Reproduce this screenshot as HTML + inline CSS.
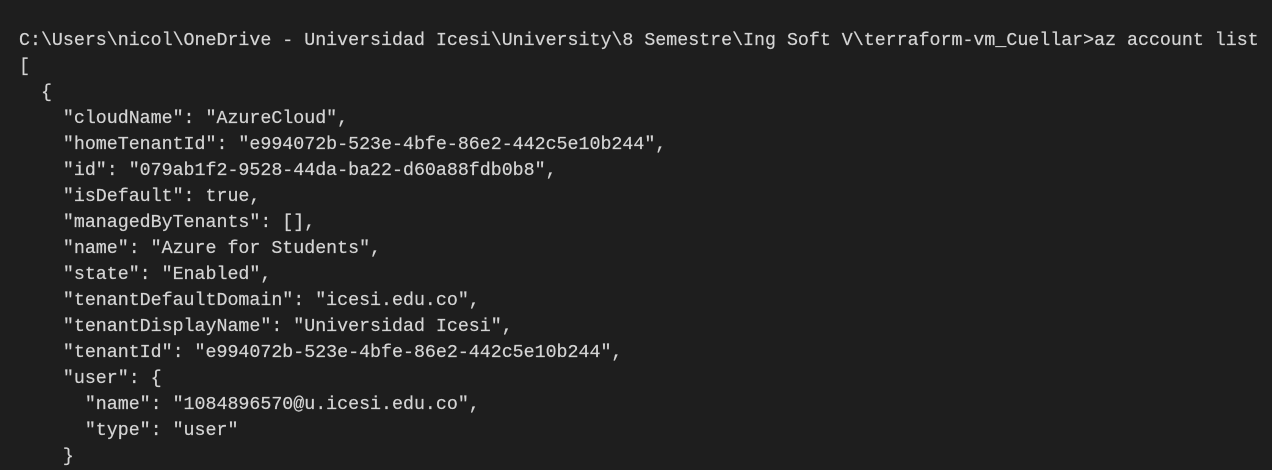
<!DOCTYPE html>
<html><head><meta charset="utf-8"><style>
html,body{margin:0;padding:0;background:#1e1e1e;width:1272px;height:465px;overflow:hidden}
pre{margin:0;position:absolute;left:19px;top:28px;font-family:"Liberation Mono",monospace;font-size:18.3px;line-height:26px;color:#d4d4d4;white-space:pre;-webkit-text-stroke:0.2px #d4d4d4}
</style></head><body><pre>C:\Users\nicol\OneDrive - Universidad Icesi\University\8 Semestre\Ing Soft V\terraform-vm_Cuellar>az account list
[
  {
    "cloudName": "AzureCloud",
    "homeTenantId": "e994072b-523e-4bfe-86e2-442c5e10b244",
    "id": "079ab1f2-9528-44da-ba22-d60a88fdb0b8",
    "isDefault": true,
    "managedByTenants": [],
    "name": "Azure for Students",
    "state": "Enabled",
    "tenantDefaultDomain": "icesi.edu.co",
    "tenantDisplayName": "Universidad Icesi",
    "tenantId": "e994072b-523e-4bfe-86e2-442c5e10b244",
    "user": {
      "name": "1084896570@u.icesi.edu.co",
      "type": "user"
    }
</pre></body></html>
